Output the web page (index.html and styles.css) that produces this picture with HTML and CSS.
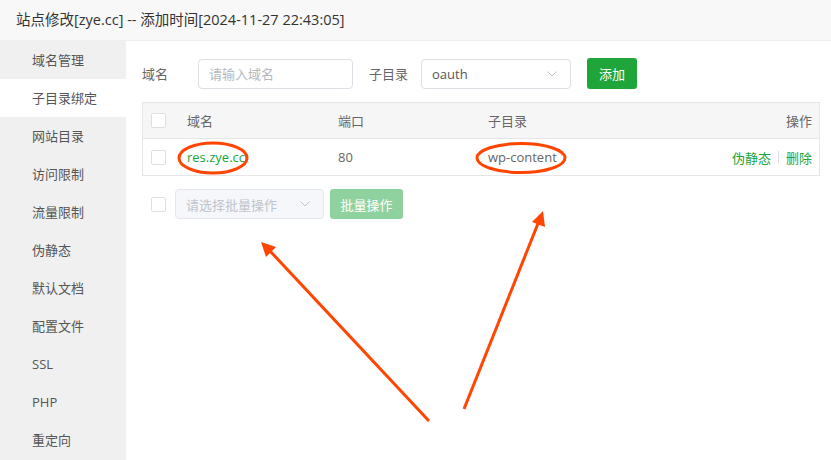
FILE: index.html
```html
<!DOCTYPE html>
<html lang="zh-CN">
<head>
    <meta charset="UTF-8">
    <meta name="viewport" content="width=device-width, initial-scale=1.0">
    <title>站点修改</title>
    <link rel="stylesheet" href="styles.css">
</head>
<body>
    <div class="page">
        <div class="title-bar">站点修改[zye.cc] -- 添加时间[2024-11-27 22:43:05]</div>
        <div class="layout">
            <ul class="side-menu">
                <li>域名管理</li>
                <li class="active">子目录绑定</li>
                <li>网站目录</li>
                <li>访问限制</li>
                <li>流量限制</li>
                <li>伪静态</li>
                <li>默认文档</li>
                <li>配置文件</li>
                <li>SSL</li>
                <li>PHP</li>
                <li>重定向</li>
            </ul>
            <div class="content">
                <div class="form-row">
                    <span class="form-label label-domain">域名</span>
                    <input class="text-input" type="text" placeholder="请输入域名">
                    <span class="form-label label-dir">子目录</span>
                    <div class="select dir-select">
                        <span>oauth</span>
                        <svg class="chevron" width="10" height="6" viewBox="0 0 10 6"><polyline points="0.5,0.5 5,5 9.5,0.5" fill="none" stroke="#c0c4cc" stroke-width="1"/></svg>
                    </div>
                    <button class="btn btn-add">添加</button>
                </div>

                <div class="table">
                    <div class="table-row table-head">
                        <div class="cell cell-check"><span class="checkbox"></span></div>
                        <div class="cell cell-domain">域名</div>
                        <div class="cell cell-port">端口</div>
                        <div class="cell cell-path">子目录</div>
                        <div class="cell cell-ops">操作</div>
                    </div>
                    <div class="table-row">
                        <div class="cell cell-check"><span class="checkbox"></span></div>
                        <div class="cell cell-domain link">res.zye.cc</div>
                        <div class="cell cell-port">80</div>
                        <div class="cell cell-path">wp-content</div>
                        <div class="cell cell-ops">
                            <span class="link">伪静态</span><span class="divider"></span><span class="link">删除</span>
                        </div>
                    </div>
                </div>

                <div class="batch-row">
                    <span class="checkbox"></span>
                    <div class="select batch-select">
                        <span class="placeholder">请选择批量操作</span>
                        <svg class="chevron" width="10" height="6" viewBox="0 0 10 6"><polyline points="0.5,0.5 5,5 9.5,0.5" fill="none" stroke="#c0c4cc" stroke-width="1"/></svg>
                    </div>
                    <button class="btn btn-batch">批量操作</button>
                </div>
            </div>
        </div>

        <!-- annotation marks -->
        <svg class="marks" width="831" height="460" viewBox="0 0 831 460">
            <ellipse cx="213" cy="158" rx="34" ry="15" fill="none" stroke="#ff4500" stroke-width="3"/>
            <ellipse cx="521" cy="158" rx="44" ry="14.5" fill="none" stroke="#ff4500" stroke-width="3"/>
            <line x1="429" y1="421" x2="270" y2="251" stroke="#ff4500" stroke-width="3"/>
            <polygon points="261,242 276,247 266,257" fill="#ff4500"/>
            <line x1="464" y1="409" x2="539" y2="221" stroke="#ff4500" stroke-width="3"/>
            <polygon points="543,211 545,227 532,222" fill="#ff4500"/>
        </svg>
    </div>
</body>
</html>
```

FILE: styles.css
```css
* {
    box-sizing: border-box;
}

body {
    margin: 0;
    font-family: "Open Sans", "Noto Sans CJK SC", sans-serif;
    font-size: 13px;
    color: #666;
    background: #fff;
}

.page {
    position: relative;
    width: 831px;
    height: 460px;
    overflow: hidden;
}

.title-bar {
    height: 41px;
    padding-left: 16px;
    line-height: 40px;
    font-size: 14.5px;
    color: #333;
    background: #f8f8f8;
    border-bottom: 1px solid #eee;
}

.layout {
    display: flex;
    height: 419px;
}

.side-menu {
    width: 126px;
    margin: 0;
    padding: 0;
    list-style: none;
    background: #f0f0f0;
}

.side-menu li {
    height: 38px;
    line-height: 38px;
    padding-left: 32px;
    color: #555;
}

.side-menu li.active {
    background: #fff;
}

.content {
    flex: 1;
    padding: 17px 11px 0 16px;
}

.form-row {
    display: flex;
    align-items: center;
    height: 31px;
}

.form-label {
    color: #666;
}

.label-domain {
    width: 56px;
}

.label-dir {
    width: 52px;
    margin-left: 16px;
}

.text-input {
    width: 155px;
    height: 30px;
    padding: 0 10px;
    border: 1px solid #dcdfe6;
    border-radius: 4px;
    font-family: inherit;
    font-size: 13px;
    outline: none;
}

.text-input::placeholder {
    color: #b4b8c0;
}

.select {
    display: flex;
    align-items: center;
    justify-content: space-between;
    height: 30px;
    padding: 0 13px 0 10px;
    border: 1px solid #dcdfe6;
    border-radius: 4px;
    background: #fff;
    color: #555;
}

.dir-select {
    width: 150px;
}

.btn {
    border: none;
    border-radius: 3px;
    color: #fff;
    font-family: inherit;
    font-size: 13px;
    padding: 0;
}

.btn-add {
    width: 50px;
    height: 31px;
    margin-left: 16px;
    background: #20a53a;
}

.table {
    margin-top: 13px;
    border: 1px solid #e6e6e6;
}

.table-row {
    display: grid;
    grid-template-columns: 44px 151px 150px 1fr auto;
    align-items: center;
    height: 36px;
    color: #666;
}

.table-head {
    background: #f6f6f6;
    border-bottom: 1px solid #e6e6e6;
}

.cell-check {
    padding-left: 8px;
    display: flex;
}

.cell-ops {
    padding-right: 7px;
    display: flex;
    align-items: center;
}

.link {
    color: #20a53a;
}

.divider {
    width: 1px;
    height: 12px;
    margin: 0 7px;
    background: #ddd;
}

.checkbox {
    display: inline-block;
    width: 15px;
    height: 15px;
    border: 1px solid #dcdfe6;
    border-radius: 2px;
    background: #fff;
}

.batch-row {
    display: flex;
    align-items: center;
    margin-top: 13px;
    padding-left: 9px;
}

.batch-select {
    width: 149px;
    margin-left: 9px;
    background: #f5f7fa;
    border-color: #e4e7ed;
}

.placeholder {
    color: #c0c4cc;
}

.btn-batch {
    width: 73px;
    height: 30px;
    margin-left: 6px;
    background: #90d29f;
}

.marks {
    position: absolute;
    left: 0;
    top: 0;
    pointer-events: none;
}
```
